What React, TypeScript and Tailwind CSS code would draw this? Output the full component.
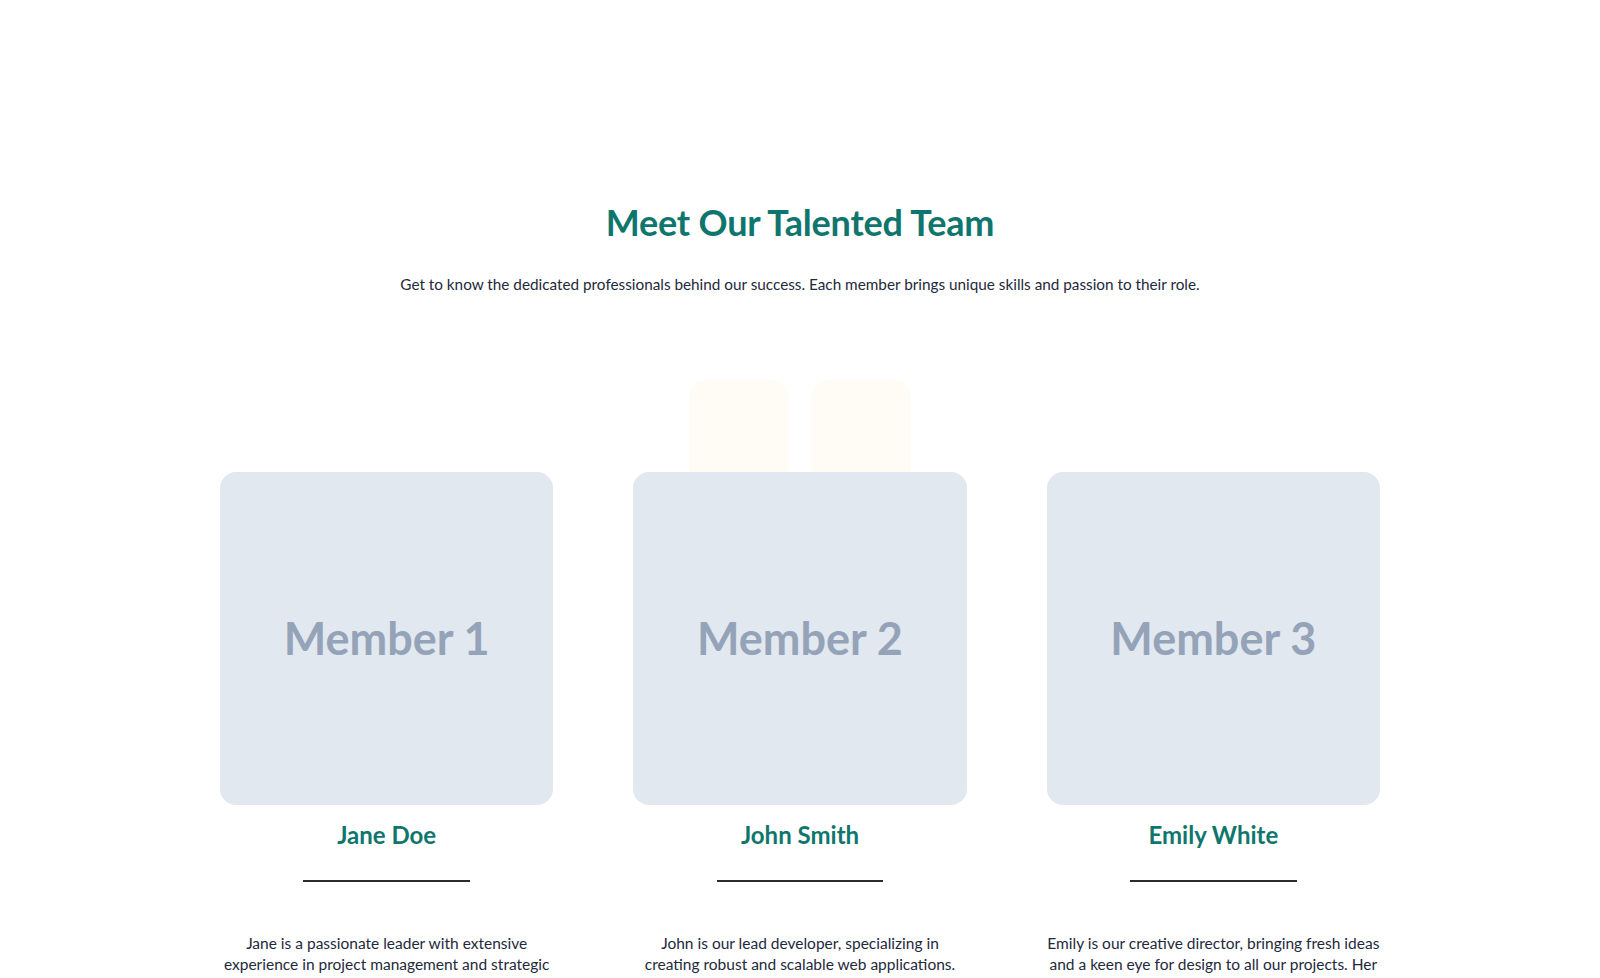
import React from "react";

type Member = {
  label: string;
  name: string;
  bio: string;
};

const members: Member[] = [
  {
    label: "Member 1",
    name: "Jane Doe",
    bio: "Jane is a passionate leader with extensive experience in project management and strategic planning. She keeps our team focused and moving forward.",
  },
  {
    label: "Member 2",
    name: "John Smith",
    bio: "John is our lead developer, specializing in creating robust and scalable web applications. He loves solving complex problems.",
  },
  {
    label: "Member 3",
    name: "Emily White",
    bio: "Emily is our creative director, bringing fresh ideas and a keen eye for design to all our projects. Her work inspires everyone around her.",
  },
];

function MemberCard({ m }: { m: Member }) {
  return (
    <div className="relative z-10 flex flex-col items-center text-center">
      <div className="flex aspect-square w-full items-center justify-center rounded-[16px] bg-[#e2e8f0]">
        <span className="font-['Lato',sans-serif] text-[45px] font-bold text-[#94a3b8]">
          {m.label}
        </span>
      </div>
      <h3 className="mt-[14px] text-[24px] font-bold leading-[32px] text-[#0f766e]">
        {m.name}
      </h3>
      <div className="mt-[29px] h-[2px] w-1/2 bg-[#2b2b2b]" />
      <p className="mt-[51px] text-[15.5px] leading-[21px] text-[#1e293b]">{m.bio}</p>
    </div>
  );
}

export default function App() {
  return (
    <div className="min-h-screen bg-white font-['Lato','Noto_Sans',sans-serif]">
      <section className="mx-auto w-[1160px] pt-[198px]">
        <h2 className="text-center text-[36px] font-bold leading-[48px] tracking-[-0.2px] text-[#0f766e]">
          Meet Our Talented Team
        </h2>
        <p className="mt-[26px] text-center text-[15.3px] leading-[24px] text-[#1e293b]">
          Get to know the dedicated professionals behind our success. Each member brings unique skills and passion to their role.
        </p>

        <div className="relative mt-[176px] grid grid-cols-3 gap-[80px]">
          {/* soft decorative tiles peeking above the middle card */}
          <div className="absolute left-[469px] top-[-93px] z-0 h-[110px] w-[100px] rounded-[20px] bg-[#fefcf5]" />
          <div className="absolute left-[591px] top-[-93px] z-0 h-[110px] w-[100px] rounded-[20px] bg-[#fefcf5]" />
          {members.map((m) => (
            <MemberCard key={m.name} m={m} />
          ))}
        </div>
      </section>
    </div>
  );
}
